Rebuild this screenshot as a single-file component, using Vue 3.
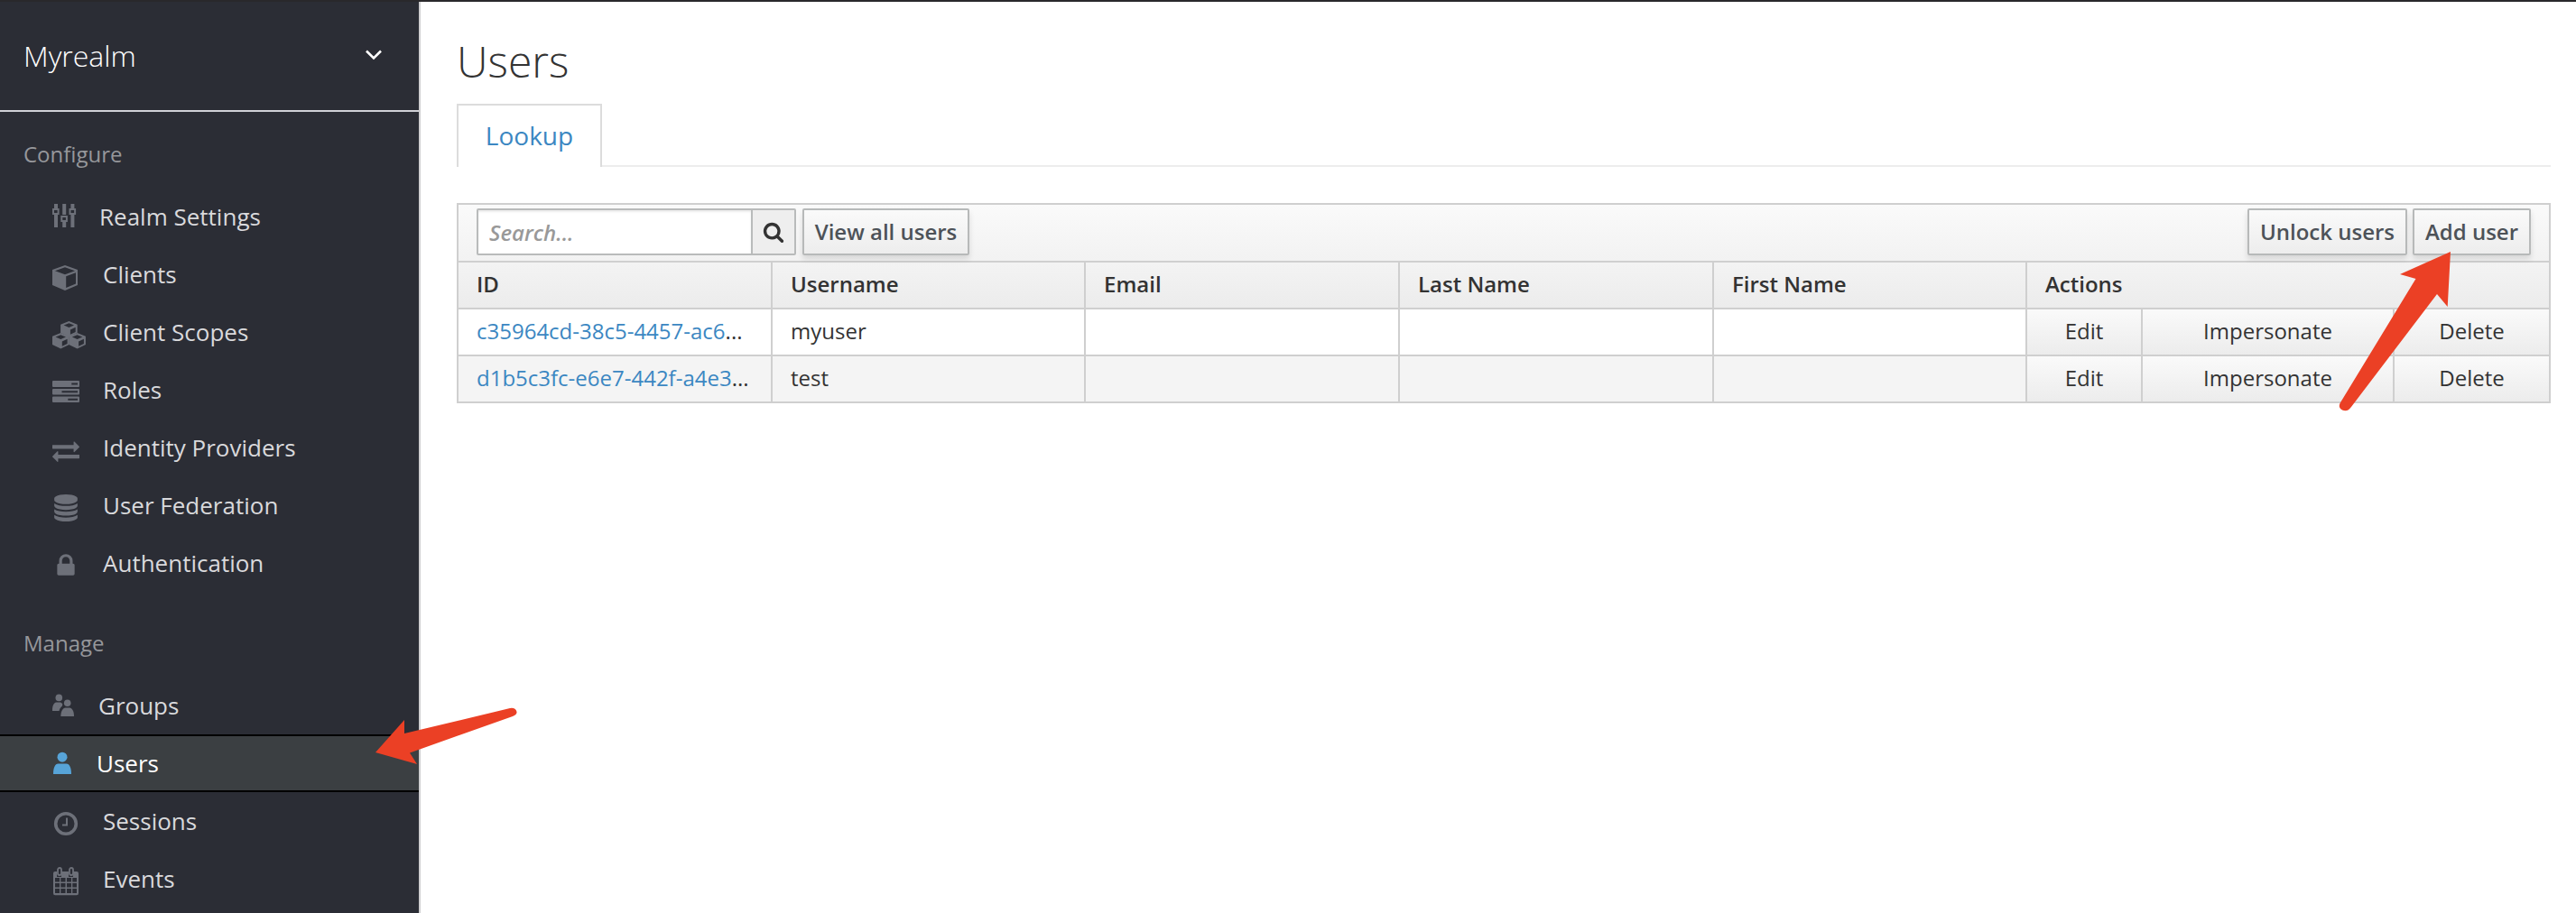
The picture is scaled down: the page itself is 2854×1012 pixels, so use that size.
<template>
  <div class="app">
    <aside class="sidebar">
      <div class="realm">
        <span>{{ realm }}</span>
        <svg class="caret" width="20" height="14" viewBox="0 0 20 14">
          <path d="M2 2.5l8 8 8-8" fill="none" stroke="#fff" stroke-width="2.6" />
        </svg>
      </div>
      <nav v-for="group in menu" :key="group.title" class="group">
        <h2>{{ group.title }}</h2>
        <ul>
          <li v-for="item in group.items" :key="item.label" :class="{ active: item.active }">
            <svg class="icon" width="44" height="40" viewBox="0 0 44 40" v-html="icons[item.icon]"></svg>
            <a :style="{ marginLeft: item.gap + 'px' }">{{ item.label }}</a>
          </li>
        </ul>
      </nav>
      <svg class="pointer pointer-menu" width="162" height="76" viewBox="0 0 162 76">
        <path d="M2 51L34 15V30L151 2Q157 1 158.500 6Q159 9 154 11L40 51.500L48 64Z" />
      </svg>
    </aside>

    <main class="content">
      <h1>Users</h1>
      <div class="tabs">
        <a class="tab">Lookup</a>
      </div>

      <section class="users">
        <div class="toolbar">
          <div class="search">
            <input type="text" placeholder="Search..." v-model="search" />
            <button class="search-btn">
              <svg width="24" height="24" viewBox="0 0 1792 1792">
                <path
                  d="M1216 832q0-185-131.5-316.5t-316.5-131.5-316.5 131.5-131.5 316.5 131.5 316.5 316.5 131.5 316.5-131.5 131.5-316.5zm512 832q0 52-38 90t-90 38q-54 0-90-38l-343-342q-179 124-399 124-143 0-273.5-55.5t-225-150-150-225-55.5-273.5 55.5-273.5 150-225 225-150 273.5-55.5 273.5 55.5 225 150 150 225 55.5 273.5q0 220-124 399l343 343q37 37 37 90z"
                  fill="#333"
                />
              </svg>
            </button>
          </div>
          <button class="btn view">View all users</button>
          <button class="btn unlock">Unlock users</button>
          <button class="btn add">Add user</button>
        </div>
        <div class="row head">
          <div v-for="column in columns" :key="column" class="cell">{{ column }}</div>
        </div>
        <div v-for="user in users" :key="user.id" class="row">
          <div class="cell"><a>{{ user.id }}</a>...</div>
          <div class="cell">{{ user.username }}</div>
          <div class="cell">{{ user.email }}</div>
          <div class="cell">{{ user.lastName }}</div>
          <div class="cell">{{ user.firstName }}</div>
          <div class="cell actions">
            <button>Edit</button>
            <button>Impersonate</button>
            <button>Delete</button>
          </div>
        </div>
        <svg class="pointer pointer-add" width="130" height="190" viewBox="0 0 130 190">
          <path d="M126 3L70 28L87.500 33L3.500 171Q1 176 6 178.500Q12 181 16 175L111 50L122.700 64Z" />
        </svg>
      </section>
    </main>
  </div>
</template>

<script setup>
  import { ref } from 'vue'

  const realm = 'Myrealm'
  const search = ref('')

  const menu = [
    {
      title: 'Configure',
      items: [
        { label: 'Realm Settings', icon: 'sliders', gap: 12 },
        { label: 'Clients', icon: 'cube', gap: 16 },
        { label: 'Client Scopes', icon: 'cubes', gap: 16 },
        { label: 'Roles', icon: 'tasks', gap: 16 },
        { label: 'Identity Providers', icon: 'exchange', gap: 16 },
        { label: 'User Federation', icon: 'database', gap: 16 },
        { label: 'Authentication', icon: 'lock', gap: 16 },
      ],
    },
    {
      title: 'Manage',
      items: [
        { label: 'Groups', icon: 'users', gap: 11 },
        { label: 'Users', icon: 'user', gap: 9, active: true },
        { label: 'Sessions', icon: 'clock', gap: 16 },
        { label: 'Events', icon: 'calendar', gap: 16 },
      ],
    },
  ]

  const columns = ['ID', 'Username', 'Email', 'Last Name', 'First Name', 'Actions']

  const users = [
    { id: 'c35964cd-38c5-4457-ac6', username: 'myuser', email: '', lastName: '', firstName: '' },
    { id: 'd1b5c3fc-e6e7-442f-a4e3', username: 'test', email: '', lastName: '', firstName: '' },
  ]

  const smallCube = (x, y) =>
    `<path transform="translate(${x} ${y})" fill-rule="evenodd" d="M9.3 0L18.6 3.8V13L9.3 17.5L0 13V3.8ZM9.3 2.2L3.6 4.6L9.3 7L15 4.6ZM10.8 9.4V14.8L16.6 12V6.8Z"/>`

  const icons = {
    sliders:
      '<path d="M6 6h4v5h-4zM6 18h4v14h-4zM15.2 6h4v12h-4zM15.2 26h4v6h-4zM24.4 6h4v5h-4zM24.4 18h4v14h-4z"/><path d="M5 12h5.6v5h-5.6zM14.3 20h5.6v5h-5.6zM23.5 12h5.6v5h-5.6z" fill="none" stroke="currentColor" stroke-width="2"/>',
    cube: '<path fill-rule="evenodd" d="M18 10L32 15V32L18 38L4 32V15ZM18 12.2L7 16.2L18 20.2L29 16.2ZM19.2 22.3V35L30 30.4V18.2Z"/>',
    cubes: smallCube(13.1, 8) + smallCube(4, 21) + smallCube(22.3, 21),
    tasks:
      '<path fill-rule="evenodd" d="M5 10H33Q34 10 34 11V16Q34 17 33 17H5Q4 17 4 16V11Q4 10 5 10ZM25.3 12.6V14.6H32V12.6ZM5 19H33Q34 19 34 20V24.5Q34 25.5 33 25.5H5Q4 25.5 4 24.5V20Q4 19 5 19ZM14.5 21.2V23.2H32V21.2ZM5 27.5H33Q34 27.5 34 28.5V33Q34 34 33 34H5Q4 34 4 33V28.5Q4 27.5 5 27.5ZM21.3 29.8V31.8H32V29.8Z"/>',
    exchange:
      '<path transform="translate(4 8.6) scale(.01674)" d="M1792 1184v192q0 13-9.5 22.5t-22.5 9.5h-1376v192q0 13-9.5 22.5t-22.5 9.5q-12 0-24-10l-319-320q-9-9-9-22 0-14 9-23l320-320q9-9 23-9 13 0 22.5 9.5t9.5 22.5v192h1376q13 0 22.5 9.5t9.5 22.5zm0-544q0 14-9 23l-320 320q-9 9-23 9-13 0-22.5-9.5t-9.5-22.5v-192h-1376q-13 0-22.5-9.5t-9.5-22.5v-192q0-13 9.5-22.5t22.5-9.5h1376v-192q0-14 9-23t23-9q12 0 24 10l319 319q9 9 9 23z"/>',
    database:
      '<path transform="translate(4 8) scale(.01674)" d="M896 768q237 0 443-43t325-127v170q0 69-103 128t-280 93.5-385 34.5-385-34.5-280-93.5-103-128v-170q119 84 325 127t443 43zm0 768q237 0 443-43t325-127v170q0 69-103 128t-280 93.5-385 34.5-385-34.5-280-93.5-103-128v-170q119 84 325 127t443 43zm0-384q237 0 443-43t325-127v170q0 69-103 128t-280 93.5-385 34.5-385-34.5-280-93.5-103-128v-170q119 84 325 127t443 43zm0-1152q208 0 385 34.5t280 93.5 103 128v128q0 69-103 128t-280 93.5-385 34.5-385-34.5-280-93.5-103-128v-128q0-69 103-128t280-93.5 385-34.5z"/>',
    lock: '<path transform="translate(4 8) scale(.01674)" d="M640 768h512v-192q0-106-75-181t-181-75-181 75-75 181v192zm832 96v576q0 40-28 68t-68 28h-960q-40 0-68-28t-28-68v-576q0-40 28-68t68-28h32v-192q0-184 132-316t316-132 316 132 132 316v192h32q40 0 68 28t28 68z"/>',
    users:
      '<circle cx="11.3" cy="11.4" r="3.8"/><path d="M4 26C4 19 6 16.5 9 16.5H13Q14.5 17 15.3 18.5Q15.5 20.5 13.5 22Q12 23.5 11.5 26Z"/><circle cx="20.7" cy="17.3" r="3.8"/><path d="M13.3 32C13.5 26 15.5 23 18.5 22.5H23C26 23 28 26 28 32Z"/>',
    user: '<circle cx="15" cy="13.2" r="5.5"/><path d="M5 32C5 25 7 20.5 10.5 20.5H19.5C23 20.5 25 25 25 32Z"/>',
    clock:
      '<circle cx="19" cy="23" r="11.3" fill="none" stroke="currentColor" stroke-width="3.6"/><path d="M20 16.5V24.5H15" fill="none" stroke="currentColor" stroke-width="2"/>',
    calendar:
      '<path fill-rule="evenodd" d="M7 12H9V18H14V12H22V18H27V12H31Q33 12 33 14V36Q33 38.3 31 38.3H7Q5 38.3 5 36V14Q5 12 7 12ZM7 19V23.5H12V19ZM13.3 19V23.5H18.5V19ZM20 19V23.5H25V19ZM26.3 19V23.5H31V19ZM7 25V29.5H12V25ZM13.3 25V29.5H18.5V25ZM20 25V29.5H25V25ZM26.3 25V29.5H31V25ZM7 31V36H12V31ZM13.3 31V36H18.5V31ZM20 31V36H25V31ZM26.3 31V36H31V31Z"/><path d="M10 10a2 2 0 0 1 4 0V14a2 2 0 0 1-4 0ZM23 10a2 2 0 0 1 4 0V14a2 2 0 0 1-4 0Z" fill="none" stroke="currentColor" stroke-width="1.8"/>',
  }
</script>

<style>
  body {
    margin: 0;
    background: #fff;
  }
</style>

<style scoped>
  * {
    box-sizing: border-box;
  }

  .app {
    display: flex;
    height: 1012px;
    border-top: 2px solid #29282b;
    overflow: hidden;
    font-family: 'Open Sans', 'Noto Sans', sans-serif;
    color: #333;
  }

  .sidebar {
    position: relative;
    flex: none;
    width: 466px;
    background: #2b2d35;
    border-right: 2px solid #cfcfd1;
  }

  .realm {
    display: flex;
    align-items: center;
    justify-content: space-between;
    height: 122px;
    padding: 0 40px 2px 26px;
    border-bottom: 2px solid #d0d0d6;
    color: #fff;
    font-size: 32px;
    font-weight: 300;
  }

  .group {
    height: 542px;
    padding-top: 31px;
  }

  .group h2 {
    height: 53px;
    margin: 0;
    padding-left: 26px;
    color: #96979b;
    font-size: 24px;
    font-weight: 400;
    line-height: 32px;
  }

  .group ul {
    margin: 0;
    padding: 0;
    list-style: none;
  }

  .group li {
    display: flex;
    align-items: center;
    height: 64px;
    padding-left: 54px;
    border: solid transparent;
    border-width: 2px 0;
    color: #d9d9dc;
    font-size: 26px;
  }

  .group li.active {
    background: #3b3f42;
    border-color: #000;
    color: #fff;
  }

  .group a {
    line-height: 36px;
  }

  .icon {
    flex: none;
    color: #6d7079;
    fill: currentColor;
  }

  .active .icon {
    color: #57a4d8;
  }

  .content {
    flex: 1;
    padding: 33px 28px 0 40px;
  }

  h1 {
    margin: 0;
    height: 80px;
    font-size: 48px;
    font-weight: 300;
    line-height: 65px;
  }

  .tabs {
    display: flex;
    height: 70px;
    border-bottom: 2px solid #ededed;
  }

  .tab {
    width: 161px;
    height: 70px;
    border: 2px solid #dcdcdc;
    border-bottom: none;
    background: #fff;
    color: #3b87c2;
    font-size: 28px;
    line-height: 67px;
    text-align: center;
  }

  .users {
    position: relative;
    margin-top: 40px;
    border: 2px solid #cfcfcf;
    font-size: 24px;
  }

  .toolbar {
    display: flex;
    align-items: flex-start;
    height: 62px;
    padding: 4px 20px 0;
    background: linear-gradient(#fafafa, #f2f2f2);
  }

  .search {
    display: flex;
    width: 354px;
    height: 52px;
    border: 2px solid #b9bbbb;
    border-radius: 2px;
  }

  .search input {
    flex: 1;
    min-width: 0;
    padding: 0 12px;
    border: none;
    outline: none;
    background: #fff;
    box-shadow: inset 0 2px 2px rgba(0, 0, 0, 0.08);
    font: 600 24px 'Open Sans', sans-serif;
  }

  .search input::placeholder {
    color: #999;
    font-style: italic;
  }

  .search-btn {
    display: flex;
    align-items: center;
    justify-content: center;
    width: 48px;
    padding: 0;
    border: none;
    border-left: 2px solid #b9bbbb;
    background: #eee;
  }

  .btn {
    height: 52px;
    padding: 0 0 2px;
    border: 2px solid #b7b9b9;
    border-radius: 2px;
    background: linear-gradient(#fafafa, #ededed);
    box-shadow: 0 4px 6px rgba(3, 3, 3, 0.12);
    color: #4d5258;
    font: 600 24px 'Open Sans', sans-serif;
  }

  .view {
    width: 185px;
    margin-left: 7px;
  }

  .unlock {
    width: 177px;
    margin-left: auto;
  }

  .add {
    width: 131px;
    margin-left: 6px;
  }

  .row {
    display: grid;
    grid-template-columns: 348px 347px 348px 348px 347px 1fr;
    height: 52px;
    border-top: 2px solid #cfcfcf;
    line-height: 47px;
  }

  .row:nth-child(4) {
    background: #f4f4f4;
  }

  .head {
    background: linear-gradient(#f3f3f3, #ececec);
    font-weight: 600;
    line-height: 48px;
  }

  .cell {
    padding-left: 20px;
    border-right: 2px solid #cfcfcf;
    white-space: nowrap;
  }

  .cell:last-child {
    border-right: none;
  }

  .cell a {
    color: #3b87c2;
  }

  .actions {
    display: grid;
    grid-template-columns: 128px 279px 1fr;
    padding: 0;
  }

  .actions button {
    padding: 0 0 3px;
    border: none;
    border-right: 2px solid #cfcfcf;
    background: linear-gradient(#fafafa, #ececec);
    color: #333;
    font: 400 24px 'Open Sans', sans-serif;
  }

  .actions button:last-child {
    border-right: none;
  }

  /* red arrows lying over the page */
  .pointer {
    position: absolute;
    z-index: 2;
    fill: #eb4025;
  }

  .pointer-menu {
    left: 414px;
    top: 781px;
  }

  .pointer-add {
    left: 2081px;
    top: 49px;
  }
</style>
